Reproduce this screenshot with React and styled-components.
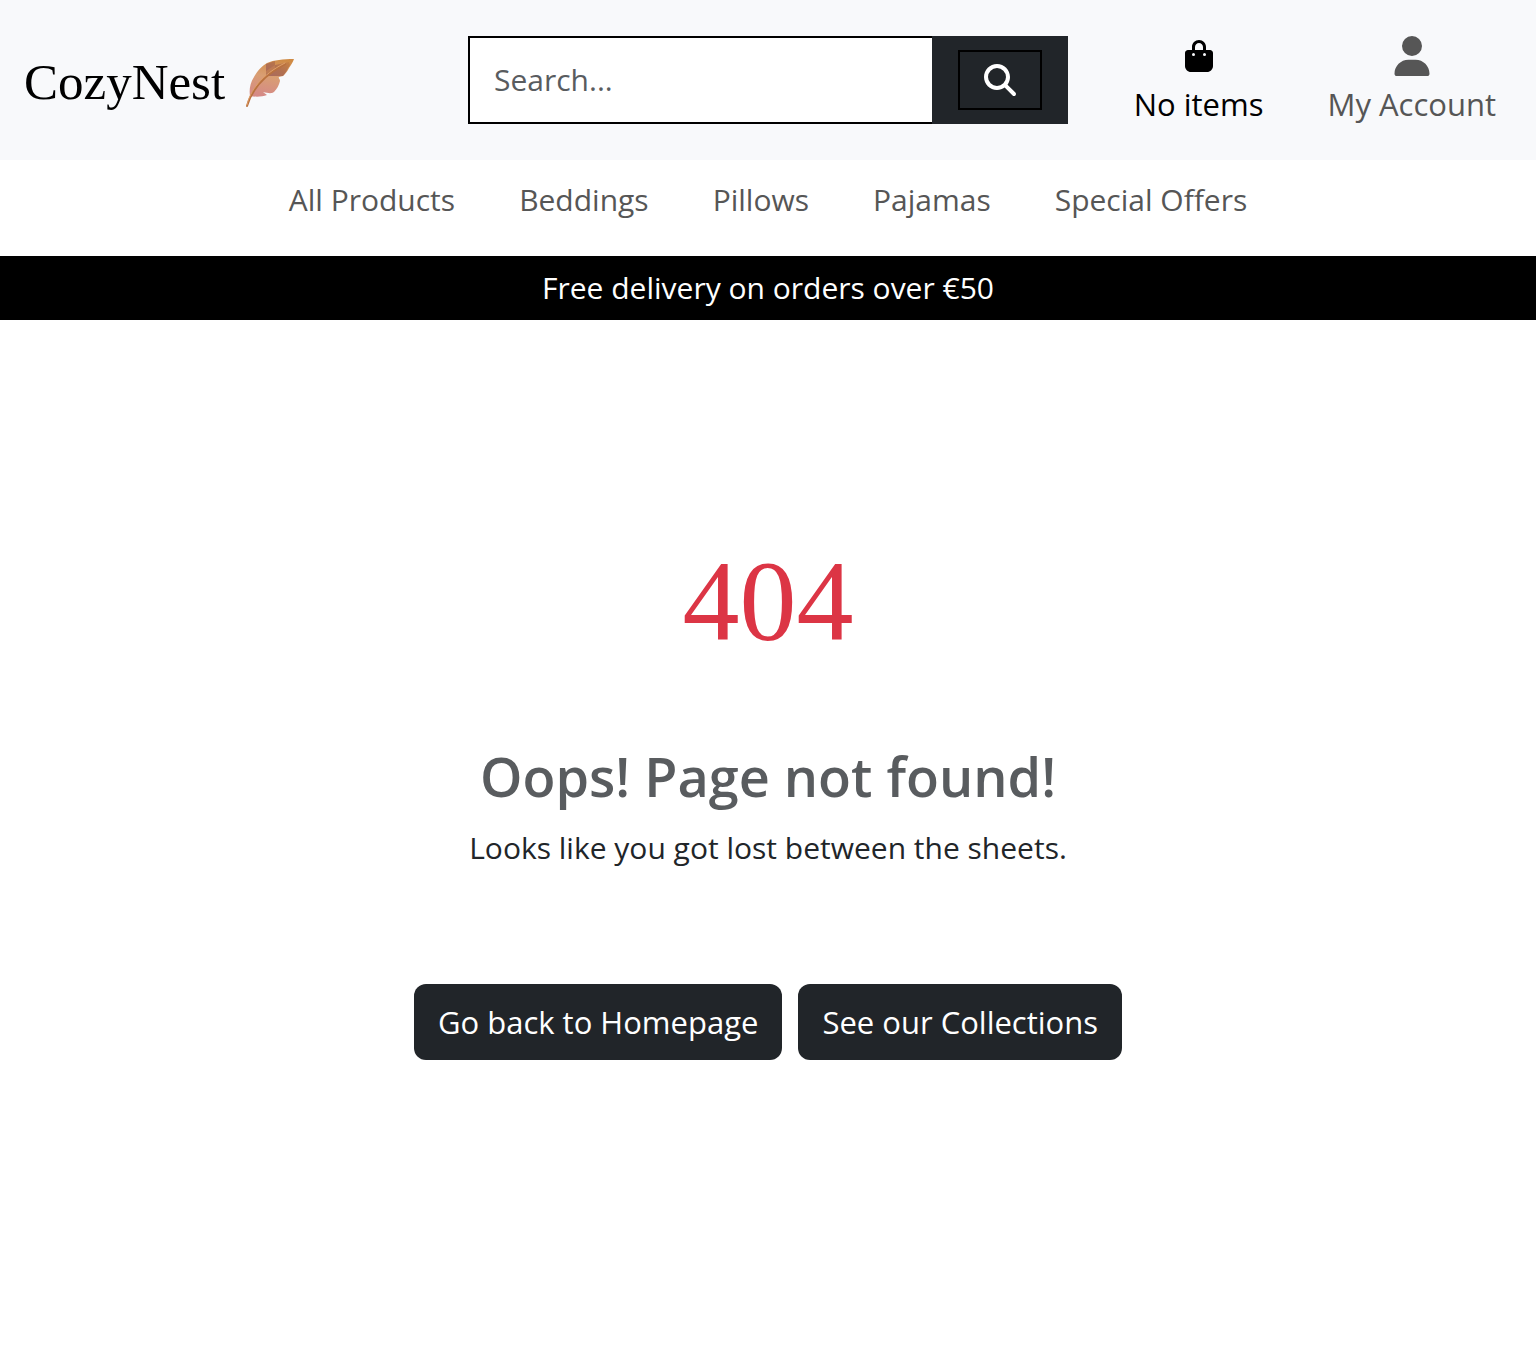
import React from 'react';
import styled, { createGlobalStyle } from 'styled-components';
import { FaBagShopping, FaMagnifyingGlass, FaUser } from 'react-icons/fa6';

const GlobalStyle = createGlobalStyle`
  *, *::before, *::after { box-sizing: border-box; }
  body {
    margin: 0;
    background: #fff;
    color: #212529;
    font-family: "Open Sans", "Noto Sans", sans-serif;
    font-size: 30px;
    line-height: 48px;
  }
  a { color: inherit; text-decoration: none; }
  h1, h2, p { margin: 0; }
`;

const Header = styled.header`
  display: grid;
  grid-template-columns: 1fr minmax(0, 600px) 1fr;
  align-items: center;
  padding: 32px 24px;
  background: #f8f9fb;
`;

const Brand = styled.a`
  display: flex;
  align-items: center;
  gap: 16px;
  padding-top: 4px;
  color: #000;
  font-family: "Liberation Serif", serif;
  font-size: 51px;
  line-height: 64px;
`;

const SearchForm = styled.form`
  display: flex;
  height: 88px;
`;

const SearchInput = styled.input`
  flex: 1;
  min-width: 0;
  padding: 0 24px;
  border: 2px solid #000;
  border-right: 0;
  border-radius: 0;
  background: #fff;
  color: #212529;
  font: inherit;
  outline: none;
  &::placeholder { color: #595c5f; opacity: 1; }
`;

const SearchButton = styled.button`
  display: flex;
  align-items: center;
  justify-content: center;
  width: 136px;
  padding: 0;
  border: 0;
  background: #212529;
  color: #fff;
  cursor: pointer;
`;

const SearchIconFrame = styled.span`
  display: flex;
  padding: 12px 24px;
  border: 2px solid #000;
  font-size: 32px;
`;

const Shortcuts = styled.div`
  display: flex;
  justify-content: flex-end;
  gap: 64px;
  padding-right: 16px;
`;

const Shortcut = styled.a`
  display: flex;
  flex-direction: column;
  align-items: center;
  color: ${({ $muted }) => ($muted ? '#565656' : '#000')};
  font-size: 31px;
  white-space: nowrap;
`;

const ShortcutIcon = styled.span`
  display: flex;
  align-items: center;
  height: 48px;
  font-size: ${({ $size }) => $size}px;
`;

const Nav = styled.nav`
  display: flex;
  flex-wrap: wrap;
  justify-content: center;
  gap: 0 64px;
  padding: 16px 24px 32px;
  color: #565656;
`;

const Banner = styled.p`
  padding: 8px 24px;
  background: #000;
  color: #fff;
  text-align: center;
`;

const Main = styled.main`
  display: flex;
  flex-direction: column;
  align-items: center;
  padding: 210px 24px;
  text-align: center;
`;

const Code = styled.h1`
  margin-bottom: 68px;
  color: #dc3545;
  font-family: "Liberation Serif", serif;
  font-size: 114px;
  font-weight: 400;
  line-height: 144px;
`;

const Title = styled.h2`
  margin-bottom: 14px;
  color: #595c5f;
  font-size: 54px;
  font-weight: 600;
  line-height: 68px;
`;

const Actions = styled.div`
  display: flex;
  flex-wrap: wrap;
  justify-content: center;
  gap: 16px;
  margin-top: 112px;
`;

const ActionLink = styled.a`
  padding: 14px 24px;
  border-radius: 12px;
  background: #212529;
  color: #fff;
  font-size: 31px;
`;

const navItems = ['All Products', 'Beddings', 'Pillows', 'Pajamas', 'Special Offers'];

function Feather() {
  return (
    <svg width="54" height="56" viewBox="0 0 54 56" aria-hidden="true">
      <defs>
        <linearGradient id="vane" x1="0.7" y1="0" x2="0.5" y2="1">
          <stop offset="0" stopColor="#cf8a43" />
          <stop offset="0.5" stopColor="#d99e73" />
          <stop offset="1" stopColor="#d58a86" />
        </linearGradient>
        <linearGradient id="shade" x1="1" y1="0" x2="0" y2="1">
          <stop offset="0" stopColor="#c98242" />
          <stop offset="0.5" stopColor="#b3714f" />
          <stop offset="1" stopColor="#a86a60" />
        </linearGradient>
      </defs>
      <path d="M9 42C8 36 9 29 13 23C17 16 21 12 26 9C33 6 42 5 53 5C52 8 50 11 48 14C46 18 44 20 42 22L38 23C37 24 39 25 39 27C38 31 36 35 33 38C30 40 27 39 22 38L26 41C21 43 14 43 9 42Z" fill="url(#vane)" />
      <path d="M25 10L34 7V11L48 8L49 11C46 15 45 19 42 22H25Z" fill="url(#shade)" />
      <path d="M25 17L34 11V16L25 20Z" fill="#be7b52" />
      <path d="M6 52C10 38 21 22 44 10" fill="none" stroke="#b9713f" strokeWidth="2" strokeLinecap="round" />
      <path d="M6 51C9 37 20 21 44 9" fill="none" stroke="#e0a068" strokeWidth="1" strokeLinecap="round" />
    </svg>
  );
}

export default function App() {
  return (
    <>
      <GlobalStyle />
      <Header>
        <Brand href="#home">
          CozyNest
          <Feather />
        </Brand>
        <SearchForm role="search" onSubmit={(event) => event.preventDefault()}>
          <SearchInput type="search" placeholder="Search..." aria-label="Search" />
          <SearchButton type="submit" aria-label="Submit search">
            <SearchIconFrame><FaMagnifyingGlass /></SearchIconFrame>
          </SearchButton>
        </SearchForm>
        <Shortcuts>
          <Shortcut href="#bag">
            <ShortcutIcon $size={32}><FaBagShopping /></ShortcutIcon>
            No items
          </Shortcut>
          <Shortcut href="#account" $muted>
            <ShortcutIcon $size={40}><FaUser /></ShortcutIcon>
            My Account
          </Shortcut>
        </Shortcuts>
      </Header>
      <Nav aria-label="Main">
        {navItems.map((item) => (
          <a key={item} href={`#${item.toLowerCase().replace(' ', '-')}`}>{item}</a>
        ))}
      </Nav>
      <Banner>Free delivery on orders over €50</Banner>
      <Main>
        <Code>404</Code>
        <Title>Oops! Page not found!</Title>
        <p>Looks like you got lost between the sheets.</p>
        <Actions>
          <ActionLink href="#home">Go back to Homepage</ActionLink>
          <ActionLink href="#collections">See our Collections</ActionLink>
        </Actions>
      </Main>
    </>
  );
}
